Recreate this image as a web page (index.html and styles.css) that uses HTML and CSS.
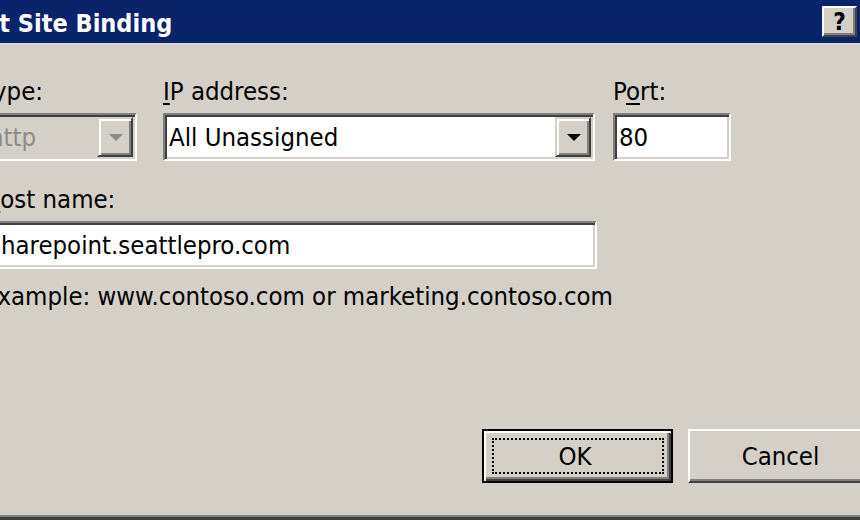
FILE: index.html
```html
<!DOCTYPE html>
<html>
<head>
<meta charset="utf-8">
<link rel="stylesheet" href="styles.css">
</head>
<body>
<div class="dialog">
  <div class="titlebar">
    <span class="title">Edit Site Binding</span>
    <button class="help">?</button>
  </div>
  <div class="client">
    <div class="row">
      <div class="group group-type">
        <div class="label"><u>T</u>ype:</div>
        <div class="field combo disabled">
          <span class="value">http</span>
          <span class="drop"><svg width="14" height="7" viewBox="0 0 14 7"><polygon points="0,0 14,0 7,7" class="arrow"/></svg></span>
        </div>
      </div>
      <div class="group group-ip">
        <div class="label"><u>I</u>P address:</div>
        <div class="field combo">
          <span class="value">All Unassigned</span>
          <span class="drop"><svg width="14" height="7" viewBox="0 0 14 7"><polygon points="0,0 14,0 7,7" class="arrow"/></svg></span>
        </div>
      </div>
      <div class="group group-port">
        <div class="label">P<u>o</u>rt:</div>
        <div class="field"><span class="value">80</span></div>
      </div>
    </div>
    <div class="group group-host">
      <div class="label"><u>H</u>ost name:</div>
      <div class="field"><span class="value">sharepoint.seattlepro.com</span></div>
    </div>
    <div class="example">Example: www.contoso.com or marketing.contoso.com</div>
    <div class="buttons">
      <button class="btn btn-default"><span class="focus">OK</span></button>
      <button class="btn"><span class="caption">Cancel</span></button>
    </div>
  </div>
</div>
</body>
</html>
```

FILE: styles.css
```css
html, body {
  margin: 0;
  padding: 0;
}
body {
  width: 860px;
  height: 520px;
  overflow: hidden;
  background: #d4d0c8;
  font-family: "DejaVu Sans Condensed", "DejaVu Sans", sans-serif;
  font-stretch: condensed;
  font-size: 25.5px;
  color: #000;
}
.dialog {
  margin-left: -40px;
  width: 920px;
  height: 520px;
  display: flex;
  flex-direction: column;
  box-shadow: inset 0 -3px #404040, inset 0 -5px #808080;
}
.titlebar {
  flex-shrink: 0;
  height: 43px;
  background: #0a246b;
  display: flex;
  align-items: center;
  justify-content: space-between;
  border-bottom: 2px solid #dedbd4;
}
.title {
  color: #fff;
  font-weight: bold;
  font-size: 25px;
  line-height: 1;
  margin-top: 3px;
  white-space: nowrap;
}
.help {
  width: 35px;
  height: 31px;
  margin-right: 23px;
  padding: 0;
  box-sizing: border-box;
  background: #d4d0c8;
  border: 2px solid;
  border-color: #fff #404040 #404040 #fff;
  box-shadow: inset -2px -2px #808080;
  font-family: inherit;
  font-stretch: condensed;
  font-weight: bold;
  font-size: 24px;
  line-height: 1;
  color: #000;
}
.client {
  flex: 1;
  display: flex;
  flex-direction: column;
  padding: 31px 0 0 23px;
}
.row {
  display: flex;
}
.group-type { width: 154px; margin-right: 26px; }
.group-ip { width: 432px; margin-right: 18px; }
.group-port { width: 118px; }
.group-host { width: 614px; margin-top: 23px; }
.label {
  height: 30px;
  line-height: 30px;
  margin-bottom: 7px;
  white-space: nowrap;
}
u {
  text-decoration-thickness: 2px;
  text-underline-offset: 3px;
}
.field {
  height: 48px;
  box-sizing: border-box;
  border: 2px solid;
  border-color: #808080 #fff #fff #808080;
  box-shadow: inset 2px 2px #404040, inset -2px -2px #d4d0c8;
  padding: 2px;
  background: #fff;
  display: flex;
}
.value {
  flex: 1;
  line-height: 40px;
  padding-left: 2px;
  white-space: nowrap;
  overflow: hidden;
}
.drop {
  width: 36px;
  box-sizing: border-box;
  background: #d4d0c8;
  border: 2px solid;
  border-color: #d4d0c8 #404040 #404040 #d4d0c8;
  box-shadow: inset 2px 2px #fff, inset -2px -2px #808080;
  display: flex;
  align-items: center;
  justify-content: center;
  padding-left: 1px;
}
.arrow { fill: #000; }
.disabled { background: #d4d0c8; }
.disabled .value { color: #8a8a8a; }
.disabled .arrow { fill: #8a8a8a; }
.example {
  margin-top: 12px;
  height: 30px;
  line-height: 30px;
  white-space: nowrap;
}
.buttons {
  margin-top: auto;
  margin-bottom: 37px;
  display: flex;
  justify-content: flex-end;
  gap: 15px;
  padding-right: 1px;
}
.btn {
  width: 191px;
  height: 54px;
  box-sizing: border-box;
  margin: 0;
  padding: 0;
  background: #d4d0c8;
  border: 2px solid;
  border-color: #fff #404040 #404040 #fff;
  box-shadow: inset -2px -2px #808080;
  font-family: inherit;
  font-stretch: condensed;
  font-size: 25.5px;
  color: #000;
  display: flex;
  align-items: center;
  justify-content: center;
}
.caption {
  margin-right: 6px;
}
.btn-default {
  border-color: #000;
  box-shadow: inset 2px 2px #fff, inset -2px -2px #404040, inset -4px -4px #808080;
  padding: 7px 7px 7px 8px;
}
.focus {
  flex: 1;
  align-self: stretch;
  border: 2px dotted #000;
  display: flex;
  align-items: center;
  justify-content: center;
  padding-right: 6px;
}
```
